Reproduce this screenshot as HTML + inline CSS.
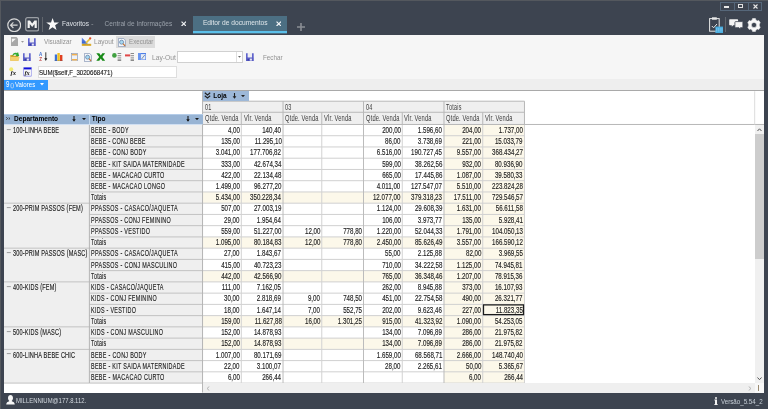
<!DOCTYPE html><html><head><meta charset="utf-8"><style>
*{margin:0;padding:0;box-sizing:border-box}
html,body{width:768px;height:409px;overflow:hidden;background:#3d4450;font-family:"Liberation Sans",sans-serif}
.a{position:absolute}
.t{position:absolute;white-space:nowrap;line-height:1}
.g{-webkit-text-stroke:0.15px currentColor}
</style></head><body><div id="root" style="position:absolute;left:0;top:0;width:768px;height:409px;background:#3d4450;will-change:transform;overflow:hidden"><div class="a" style="left:0;top:0;width:768px;height:1px;background:#54585e"></div>
<div class="a" style="left:0;top:0;width:1px;height:409px;background:#54585e"></div>
<div class="a" style="left:4px;top:34.5px;width:760px;height:358px;background:#f6f6f6"></div>
<div class="a" style="left:4px;top:90.3px;width:760px;height:302.3px;background:#fff"></div>
<div class="a" style="left:89.4px;top:124.48px;width:113.15px;height:11.24px;background:#efefef"></div>
<div class="a" style="left:443.99px;top:124.48px;width:80.48px;height:11.24px;background:#fcf8ea"></div>
<div class="a" style="left:89.4px;top:135.72px;width:113.15px;height:11.24px;background:#efefef"></div>
<div class="a" style="left:443.99px;top:135.72px;width:80.48px;height:11.24px;background:#fcf8ea"></div>
<div class="a" style="left:89.4px;top:146.96px;width:113.15px;height:11.24px;background:#efefef"></div>
<div class="a" style="left:443.99px;top:146.96px;width:80.48px;height:11.24px;background:#fcf8ea"></div>
<div class="a" style="left:89.4px;top:158.21px;width:113.15px;height:11.24px;background:#efefef"></div>
<div class="a" style="left:443.99px;top:158.21px;width:80.48px;height:11.24px;background:#fcf8ea"></div>
<div class="a" style="left:89.4px;top:169.45px;width:113.15px;height:11.24px;background:#efefef"></div>
<div class="a" style="left:443.99px;top:169.45px;width:80.48px;height:11.24px;background:#fcf8ea"></div>
<div class="a" style="left:89.4px;top:180.7px;width:113.15px;height:11.24px;background:#efefef"></div>
<div class="a" style="left:443.99px;top:180.7px;width:80.48px;height:11.24px;background:#fcf8ea"></div>
<div class="a" style="left:89.4px;top:191.94px;width:113.15px;height:11.24px;background:#efefef"></div>
<div class="a" style="left:202.55px;top:191.94px;width:321.92px;height:11.24px;background:#fcf8ea"></div>
<div class="a" style="left:89.4px;top:203.18px;width:113.15px;height:11.24px;background:#efefef"></div>
<div class="a" style="left:443.99px;top:203.18px;width:80.48px;height:11.24px;background:#fcf8ea"></div>
<div class="a" style="left:89.4px;top:214.43px;width:113.15px;height:11.24px;background:#efefef"></div>
<div class="a" style="left:443.99px;top:214.43px;width:80.48px;height:11.24px;background:#fcf8ea"></div>
<div class="a" style="left:89.4px;top:225.67px;width:113.15px;height:11.24px;background:#efefef"></div>
<div class="a" style="left:443.99px;top:225.67px;width:80.48px;height:11.24px;background:#fcf8ea"></div>
<div class="a" style="left:89.4px;top:236.92px;width:113.15px;height:11.24px;background:#efefef"></div>
<div class="a" style="left:202.55px;top:236.92px;width:321.92px;height:11.24px;background:#fcf8ea"></div>
<div class="a" style="left:89.4px;top:248.16px;width:113.15px;height:11.24px;background:#efefef"></div>
<div class="a" style="left:443.99px;top:248.16px;width:80.48px;height:11.24px;background:#fcf8ea"></div>
<div class="a" style="left:89.4px;top:259.4px;width:113.15px;height:11.24px;background:#efefef"></div>
<div class="a" style="left:443.99px;top:259.4px;width:80.48px;height:11.24px;background:#fcf8ea"></div>
<div class="a" style="left:89.4px;top:270.65px;width:113.15px;height:11.24px;background:#efefef"></div>
<div class="a" style="left:202.55px;top:270.65px;width:321.92px;height:11.24px;background:#fcf8ea"></div>
<div class="a" style="left:89.4px;top:281.89px;width:113.15px;height:11.24px;background:#efefef"></div>
<div class="a" style="left:443.99px;top:281.89px;width:80.48px;height:11.24px;background:#fcf8ea"></div>
<div class="a" style="left:89.4px;top:293.14px;width:113.15px;height:11.24px;background:#efefef"></div>
<div class="a" style="left:443.99px;top:293.14px;width:80.48px;height:11.24px;background:#fcf8ea"></div>
<div class="a" style="left:89.4px;top:304.38px;width:113.15px;height:11.24px;background:#efefef"></div>
<div class="a" style="left:443.99px;top:304.38px;width:80.48px;height:11.24px;background:#fcf8ea"></div>
<div class="a" style="left:89.4px;top:315.62px;width:113.15px;height:11.24px;background:#efefef"></div>
<div class="a" style="left:202.55px;top:315.62px;width:321.92px;height:11.24px;background:#fcf8ea"></div>
<div class="a" style="left:89.4px;top:326.87px;width:113.15px;height:11.24px;background:#efefef"></div>
<div class="a" style="left:443.99px;top:326.87px;width:80.48px;height:11.24px;background:#fcf8ea"></div>
<div class="a" style="left:89.4px;top:338.11px;width:113.15px;height:11.24px;background:#efefef"></div>
<div class="a" style="left:202.55px;top:338.11px;width:321.92px;height:11.24px;background:#fcf8ea"></div>
<div class="a" style="left:89.4px;top:349.36px;width:113.15px;height:11.24px;background:#efefef"></div>
<div class="a" style="left:443.99px;top:349.36px;width:80.48px;height:11.24px;background:#fcf8ea"></div>
<div class="a" style="left:89.4px;top:360.6px;width:113.15px;height:11.24px;background:#efefef"></div>
<div class="a" style="left:443.99px;top:360.6px;width:80.48px;height:11.24px;background:#fcf8ea"></div>
<div class="a" style="left:89.4px;top:371.84px;width:113.15px;height:11.24px;background:#efefef"></div>
<div class="a" style="left:443.99px;top:371.84px;width:80.48px;height:11.24px;background:#fcf8ea"></div>
<div class="a" style="left:4px;top:124.48px;width:85.4px;height:258.61px;background:#efefef"></div>
<svg class="a" style="left:0;top:0" width="768" height="409" viewBox="0 0 768 409" fill="none"><path d="M89.4 135.72H202.55" stroke="#c2c2c2" stroke-width="1.0"/><path d="M202.55 135.72H524.47" stroke="#d0d0d0" stroke-width="1.0"/><path d="M89.4 146.96H202.55" stroke="#c2c2c2" stroke-width="1.0"/><path d="M202.55 146.96H524.47" stroke="#d0d0d0" stroke-width="1.0"/><path d="M89.4 158.21H202.55" stroke="#c2c2c2" stroke-width="1.0"/><path d="M202.55 158.21H524.47" stroke="#d0d0d0" stroke-width="1.0"/><path d="M89.4 169.45H202.55" stroke="#c2c2c2" stroke-width="1.0"/><path d="M202.55 169.45H524.47" stroke="#d0d0d0" stroke-width="1.0"/><path d="M89.4 180.7H202.55" stroke="#c2c2c2" stroke-width="1.0"/><path d="M202.55 180.7H524.47" stroke="#d0d0d0" stroke-width="1.0"/><path d="M89.4 191.94H202.55" stroke="#c2c2c2" stroke-width="1.0"/><path d="M202.55 191.94H524.47" stroke="#d0d0d0" stroke-width="1.0"/><path d="M89.4 203.18H202.55" stroke="#c2c2c2" stroke-width="1.0"/><path d="M202.55 203.18H524.47" stroke="#d0d0d0" stroke-width="1.0"/><path d="M89.4 214.43H202.55" stroke="#c2c2c2" stroke-width="1.0"/><path d="M202.55 214.43H524.47" stroke="#d0d0d0" stroke-width="1.0"/><path d="M89.4 225.67H202.55" stroke="#c2c2c2" stroke-width="1.0"/><path d="M202.55 225.67H524.47" stroke="#d0d0d0" stroke-width="1.0"/><path d="M89.4 236.92H202.55" stroke="#c2c2c2" stroke-width="1.0"/><path d="M202.55 236.92H524.47" stroke="#d0d0d0" stroke-width="1.0"/><path d="M89.4 248.16H202.55" stroke="#c2c2c2" stroke-width="1.0"/><path d="M202.55 248.16H524.47" stroke="#d0d0d0" stroke-width="1.0"/><path d="M89.4 259.4H202.55" stroke="#c2c2c2" stroke-width="1.0"/><path d="M202.55 259.4H524.47" stroke="#d0d0d0" stroke-width="1.0"/><path d="M89.4 270.65H202.55" stroke="#c2c2c2" stroke-width="1.0"/><path d="M202.55 270.65H524.47" stroke="#d0d0d0" stroke-width="1.0"/><path d="M89.4 281.89H202.55" stroke="#c2c2c2" stroke-width="1.0"/><path d="M202.55 281.89H524.47" stroke="#d0d0d0" stroke-width="1.0"/><path d="M89.4 293.14H202.55" stroke="#c2c2c2" stroke-width="1.0"/><path d="M202.55 293.14H524.47" stroke="#d0d0d0" stroke-width="1.0"/><path d="M89.4 304.38H202.55" stroke="#c2c2c2" stroke-width="1.0"/><path d="M202.55 304.38H524.47" stroke="#d0d0d0" stroke-width="1.0"/><path d="M89.4 315.62H202.55" stroke="#c2c2c2" stroke-width="1.0"/><path d="M202.55 315.62H524.47" stroke="#d0d0d0" stroke-width="1.0"/><path d="M89.4 326.87H202.55" stroke="#c2c2c2" stroke-width="1.0"/><path d="M202.55 326.87H524.47" stroke="#d0d0d0" stroke-width="1.0"/><path d="M89.4 338.11H202.55" stroke="#c2c2c2" stroke-width="1.0"/><path d="M202.55 338.11H524.47" stroke="#d0d0d0" stroke-width="1.0"/><path d="M89.4 349.36H202.55" stroke="#c2c2c2" stroke-width="1.0"/><path d="M202.55 349.36H524.47" stroke="#d0d0d0" stroke-width="1.0"/><path d="M89.4 360.6H202.55" stroke="#c2c2c2" stroke-width="1.0"/><path d="M202.55 360.6H524.47" stroke="#d0d0d0" stroke-width="1.0"/><path d="M89.4 371.84H202.55" stroke="#c2c2c2" stroke-width="1.0"/><path d="M202.55 371.84H524.47" stroke="#d0d0d0" stroke-width="1.0"/><path d="M89.4 383.09H202.55" stroke="#c2c2c2" stroke-width="1.0"/><path d="M202.55 383.09H524.47" stroke="#d0d0d0" stroke-width="1.0"/><path d="M4 203.18H89.4" stroke="#c2c2c2" stroke-width="1.0"/><path d="M4 248.16H89.4" stroke="#c2c2c2" stroke-width="1.0"/><path d="M4 281.89H89.4" stroke="#c2c2c2" stroke-width="1.0"/><path d="M4 326.87H89.4" stroke="#c2c2c2" stroke-width="1.0"/><path d="M4 349.36H89.4" stroke="#c2c2c2" stroke-width="1.0"/><path d="M4 383.09H89.4" stroke="#c2c2c2" stroke-width="1.0"/><path d="M89.4 124.48V383.09" stroke="#b4b4b4" stroke-width="1.0"/><path d="M202.55 91.2V392.6" stroke="#b4b4b4" stroke-width="1.0"/><path d="M241.3 124.48V383.09" stroke="#d2d2d2" stroke-width="1.0"/><path d="M283.03 124.48V383.09" stroke="#bcbcbc" stroke-width="1.0"/><path d="M321.78 124.48V383.09" stroke="#d2d2d2" stroke-width="1.0"/><path d="M363.51 124.48V383.09" stroke="#bcbcbc" stroke-width="1.0"/><path d="M402.26 124.48V383.09" stroke="#d2d2d2" stroke-width="1.0"/><path d="M443.99 124.48V383.09" stroke="#bcbcbc" stroke-width="1.0"/><path d="M482.74 124.48V383.09" stroke="#d2d2d2" stroke-width="1.0"/><path d="M524.47 124.48V383.09" stroke="#d2d2d2" stroke-width="1.0"/></svg>
<svg class="a" style="left:6px;top:127.58px" width="6" height="3"><path d="M0.8 1.6H4.8" stroke="#777" stroke-width="0.7"/></svg>
<div class="t g" style="top:126.77px;font-size:8.2px;color:#1e1e1e;letter-spacing:0.25px;left:12.7px;transform:scaleX(0.6828);transform-origin:0 0;">100-LINHA BEBE</div>
<div class="t g" style="top:126.77px;font-size:8.2px;color:#1e1e1e;letter-spacing:0.45px;left:91.4px;transform:scaleX(0.6623);transform-origin:0 0;">BEBE - BODY</div>
<div class="t g" style="top:126.77px;font-size:8.2px;color:#1e1e1e;right:528.4px;transform:scaleX(0.7550);transform-origin:100% 0;">4,00</div>
<div class="t g" style="top:126.77px;font-size:8.2px;color:#1e1e1e;right:486.67px;transform:scaleX(0.7550);transform-origin:100% 0;">140,40</div>
<div class="t g" style="top:126.77px;font-size:8.2px;color:#1e1e1e;right:367.44px;transform:scaleX(0.7550);transform-origin:100% 0;">200,00</div>
<div class="t g" style="top:126.77px;font-size:8.2px;color:#1e1e1e;right:325.71px;transform:scaleX(0.7550);transform-origin:100% 0;">1.596,60</div>
<div class="t g" style="top:126.77px;font-size:8.2px;color:#1e1e1e;right:286.96px;transform:scaleX(0.7550);transform-origin:100% 0;">204,00</div>
<div class="t g" style="top:126.77px;font-size:8.2px;color:#1e1e1e;right:245.23px;transform:scaleX(0.7550);transform-origin:100% 0;">1.737,00</div>
<div class="t g" style="top:138.01px;font-size:8.2px;color:#1e1e1e;letter-spacing:0.45px;left:91.4px;transform:scaleX(0.6619);transform-origin:0 0;">BEBE - CONJ BEBE</div>
<div class="t g" style="top:138.01px;font-size:8.2px;color:#1e1e1e;right:528.4px;transform:scaleX(0.7550);transform-origin:100% 0;">135,00</div>
<div class="t g" style="top:138.01px;font-size:8.2px;color:#1e1e1e;right:486.67px;transform:scaleX(0.7550);transform-origin:100% 0;">11.295,10</div>
<div class="t g" style="top:138.01px;font-size:8.2px;color:#1e1e1e;right:367.44px;transform:scaleX(0.7550);transform-origin:100% 0;">86,00</div>
<div class="t g" style="top:138.01px;font-size:8.2px;color:#1e1e1e;right:325.71px;transform:scaleX(0.7550);transform-origin:100% 0;">3.738,69</div>
<div class="t g" style="top:138.01px;font-size:8.2px;color:#1e1e1e;right:286.96px;transform:scaleX(0.7550);transform-origin:100% 0;">221,00</div>
<div class="t g" style="top:138.01px;font-size:8.2px;color:#1e1e1e;right:245.23px;transform:scaleX(0.7550);transform-origin:100% 0;">15.033,79</div>
<div class="t g" style="top:149.26px;font-size:8.2px;color:#1e1e1e;letter-spacing:0.45px;left:91.4px;transform:scaleX(0.6629);transform-origin:0 0;">BEBE - CONJ BODY</div>
<div class="t g" style="top:149.26px;font-size:8.2px;color:#1e1e1e;right:528.4px;transform:scaleX(0.7550);transform-origin:100% 0;">3.041,00</div>
<div class="t g" style="top:149.26px;font-size:8.2px;color:#1e1e1e;right:486.67px;transform:scaleX(0.7550);transform-origin:100% 0;">177.706,82</div>
<div class="t g" style="top:149.26px;font-size:8.2px;color:#1e1e1e;right:367.44px;transform:scaleX(0.7550);transform-origin:100% 0;">6.516,00</div>
<div class="t g" style="top:149.26px;font-size:8.2px;color:#1e1e1e;right:325.71px;transform:scaleX(0.7550);transform-origin:100% 0;">190.727,45</div>
<div class="t g" style="top:149.26px;font-size:8.2px;color:#1e1e1e;right:286.96px;transform:scaleX(0.7550);transform-origin:100% 0;">9.557,00</div>
<div class="t g" style="top:149.26px;font-size:8.2px;color:#1e1e1e;right:245.23px;transform:scaleX(0.7550);transform-origin:100% 0;">368.434,27</div>
<div class="t g" style="top:160.5px;font-size:8.2px;color:#1e1e1e;letter-spacing:0.45px;left:91.4px;transform:scaleX(0.6607);transform-origin:0 0;">BEBE - KIT SAIDA MATERNIDADE</div>
<div class="t g" style="top:160.5px;font-size:8.2px;color:#1e1e1e;right:528.4px;transform:scaleX(0.7550);transform-origin:100% 0;">333,00</div>
<div class="t g" style="top:160.5px;font-size:8.2px;color:#1e1e1e;right:486.67px;transform:scaleX(0.7550);transform-origin:100% 0;">42.674,34</div>
<div class="t g" style="top:160.5px;font-size:8.2px;color:#1e1e1e;right:367.44px;transform:scaleX(0.7550);transform-origin:100% 0;">599,00</div>
<div class="t g" style="top:160.5px;font-size:8.2px;color:#1e1e1e;right:325.71px;transform:scaleX(0.7550);transform-origin:100% 0;">38.262,56</div>
<div class="t g" style="top:160.5px;font-size:8.2px;color:#1e1e1e;right:286.96px;transform:scaleX(0.7550);transform-origin:100% 0;">932,00</div>
<div class="t g" style="top:160.5px;font-size:8.2px;color:#1e1e1e;right:245.23px;transform:scaleX(0.7550);transform-origin:100% 0;">80.936,90</div>
<div class="t g" style="top:171.75px;font-size:8.2px;color:#1e1e1e;letter-spacing:0.45px;left:91.4px;transform:scaleX(0.6660);transform-origin:0 0;">BEBE - MACACAO CURTO</div>
<div class="t g" style="top:171.75px;font-size:8.2px;color:#1e1e1e;right:528.4px;transform:scaleX(0.7550);transform-origin:100% 0;">422,00</div>
<div class="t g" style="top:171.75px;font-size:8.2px;color:#1e1e1e;right:486.67px;transform:scaleX(0.7550);transform-origin:100% 0;">22.134,48</div>
<div class="t g" style="top:171.75px;font-size:8.2px;color:#1e1e1e;right:367.44px;transform:scaleX(0.7550);transform-origin:100% 0;">665,00</div>
<div class="t g" style="top:171.75px;font-size:8.2px;color:#1e1e1e;right:325.71px;transform:scaleX(0.7550);transform-origin:100% 0;">17.445,86</div>
<div class="t g" style="top:171.75px;font-size:8.2px;color:#1e1e1e;right:286.96px;transform:scaleX(0.7550);transform-origin:100% 0;">1.087,00</div>
<div class="t g" style="top:171.75px;font-size:8.2px;color:#1e1e1e;right:245.23px;transform:scaleX(0.7550);transform-origin:100% 0;">39.580,33</div>
<div class="t g" style="top:182.99px;font-size:8.2px;color:#1e1e1e;letter-spacing:0.45px;left:91.4px;transform:scaleX(0.6664);transform-origin:0 0;">BEBE - MACACAO LONGO</div>
<div class="t g" style="top:182.99px;font-size:8.2px;color:#1e1e1e;right:528.4px;transform:scaleX(0.7550);transform-origin:100% 0;">1.499,00</div>
<div class="t g" style="top:182.99px;font-size:8.2px;color:#1e1e1e;right:486.67px;transform:scaleX(0.7550);transform-origin:100% 0;">96.277,20</div>
<div class="t g" style="top:182.99px;font-size:8.2px;color:#1e1e1e;right:367.44px;transform:scaleX(0.7550);transform-origin:100% 0;">4.011,00</div>
<div class="t g" style="top:182.99px;font-size:8.2px;color:#1e1e1e;right:325.71px;transform:scaleX(0.7550);transform-origin:100% 0;">127.547,07</div>
<div class="t g" style="top:182.99px;font-size:8.2px;color:#1e1e1e;right:286.96px;transform:scaleX(0.7550);transform-origin:100% 0;">5.510,00</div>
<div class="t g" style="top:182.99px;font-size:8.2px;color:#1e1e1e;right:245.23px;transform:scaleX(0.7550);transform-origin:100% 0;">223.824,28</div>
<div class="t g" style="top:194.23px;font-size:8.2px;color:#1e1e1e;letter-spacing:0.45px;left:91.4px;transform:scaleX(0.6437);transform-origin:0 0;">Totais</div>
<div class="t g" style="top:194.23px;font-size:8.2px;color:#1e1e1e;right:528.4px;transform:scaleX(0.7550);transform-origin:100% 0;">5.434,00</div>
<div class="t g" style="top:194.23px;font-size:8.2px;color:#1e1e1e;right:486.67px;transform:scaleX(0.7550);transform-origin:100% 0;">350.228,34</div>
<div class="t g" style="top:194.23px;font-size:8.2px;color:#1e1e1e;right:367.44px;transform:scaleX(0.7550);transform-origin:100% 0;">12.077,00</div>
<div class="t g" style="top:194.23px;font-size:8.2px;color:#1e1e1e;right:325.71px;transform:scaleX(0.7550);transform-origin:100% 0;">379.318,23</div>
<div class="t g" style="top:194.23px;font-size:8.2px;color:#1e1e1e;right:286.96px;transform:scaleX(0.7550);transform-origin:100% 0;">17.511,00</div>
<div class="t g" style="top:194.23px;font-size:8.2px;color:#1e1e1e;right:245.23px;transform:scaleX(0.7550);transform-origin:100% 0;">729.546,57</div>
<svg class="a" style="left:6px;top:206.28px" width="6" height="3"><path d="M0.8 1.6H4.8" stroke="#777" stroke-width="0.7"/></svg>
<div class="t g" style="top:205.48px;font-size:8.2px;color:#1e1e1e;letter-spacing:0.25px;left:12.7px;transform:scaleX(0.6831);transform-origin:0 0;">200-PRIM PASSOS (FEM)</div>
<div class="t g" style="top:205.48px;font-size:8.2px;color:#1e1e1e;letter-spacing:0.45px;left:91.4px;transform:scaleX(0.6651);transform-origin:0 0;">PPASSOS - CASACO/JAQUETA</div>
<div class="t g" style="top:205.48px;font-size:8.2px;color:#1e1e1e;right:528.4px;transform:scaleX(0.7550);transform-origin:100% 0;">507,00</div>
<div class="t g" style="top:205.48px;font-size:8.2px;color:#1e1e1e;right:486.67px;transform:scaleX(0.7550);transform-origin:100% 0;">27.003,19</div>
<div class="t g" style="top:205.48px;font-size:8.2px;color:#1e1e1e;right:367.44px;transform:scaleX(0.7550);transform-origin:100% 0;">1.124,00</div>
<div class="t g" style="top:205.48px;font-size:8.2px;color:#1e1e1e;right:325.71px;transform:scaleX(0.7550);transform-origin:100% 0;">29.608,39</div>
<div class="t g" style="top:205.48px;font-size:8.2px;color:#1e1e1e;right:286.96px;transform:scaleX(0.7550);transform-origin:100% 0;">1.631,00</div>
<div class="t g" style="top:205.48px;font-size:8.2px;color:#1e1e1e;right:245.23px;transform:scaleX(0.7550);transform-origin:100% 0;">56.611,58</div>
<div class="t g" style="top:216.72px;font-size:8.2px;color:#1e1e1e;letter-spacing:0.45px;left:91.4px;transform:scaleX(0.6629);transform-origin:0 0;">PPASSOS - CONJ FEMININO</div>
<div class="t g" style="top:216.72px;font-size:8.2px;color:#1e1e1e;right:528.4px;transform:scaleX(0.7550);transform-origin:100% 0;">29,00</div>
<div class="t g" style="top:216.72px;font-size:8.2px;color:#1e1e1e;right:486.67px;transform:scaleX(0.7550);transform-origin:100% 0;">1.954,64</div>
<div class="t g" style="top:216.72px;font-size:8.2px;color:#1e1e1e;right:367.44px;transform:scaleX(0.7550);transform-origin:100% 0;">106,00</div>
<div class="t g" style="top:216.72px;font-size:8.2px;color:#1e1e1e;right:325.71px;transform:scaleX(0.7550);transform-origin:100% 0;">3.973,77</div>
<div class="t g" style="top:216.72px;font-size:8.2px;color:#1e1e1e;right:286.96px;transform:scaleX(0.7550);transform-origin:100% 0;">135,00</div>
<div class="t g" style="top:216.72px;font-size:8.2px;color:#1e1e1e;right:245.23px;transform:scaleX(0.7550);transform-origin:100% 0;">5.928,41</div>
<div class="t g" style="top:227.97px;font-size:8.2px;color:#1e1e1e;letter-spacing:0.45px;left:91.4px;transform:scaleX(0.6630);transform-origin:0 0;">PPASSOS - VESTIDO</div>
<div class="t g" style="top:227.97px;font-size:8.2px;color:#1e1e1e;right:528.4px;transform:scaleX(0.7550);transform-origin:100% 0;">559,00</div>
<div class="t g" style="top:227.97px;font-size:8.2px;color:#1e1e1e;right:486.67px;transform:scaleX(0.7550);transform-origin:100% 0;">51.227,00</div>
<div class="t g" style="top:227.97px;font-size:8.2px;color:#1e1e1e;right:447.92px;transform:scaleX(0.7550);transform-origin:100% 0;">12,00</div>
<div class="t g" style="top:227.97px;font-size:8.2px;color:#1e1e1e;right:406.19px;transform:scaleX(0.7550);transform-origin:100% 0;">778,80</div>
<div class="t g" style="top:227.97px;font-size:8.2px;color:#1e1e1e;right:367.44px;transform:scaleX(0.7550);transform-origin:100% 0;">1.220,00</div>
<div class="t g" style="top:227.97px;font-size:8.2px;color:#1e1e1e;right:325.71px;transform:scaleX(0.7550);transform-origin:100% 0;">52.044,33</div>
<div class="t g" style="top:227.97px;font-size:8.2px;color:#1e1e1e;right:286.96px;transform:scaleX(0.7550);transform-origin:100% 0;">1.791,00</div>
<div class="t g" style="top:227.97px;font-size:8.2px;color:#1e1e1e;right:245.23px;transform:scaleX(0.7550);transform-origin:100% 0;">104.050,13</div>
<div class="t g" style="top:239.21px;font-size:8.2px;color:#1e1e1e;letter-spacing:0.45px;left:91.4px;transform:scaleX(0.6437);transform-origin:0 0;">Totais</div>
<div class="t g" style="top:239.21px;font-size:8.2px;color:#1e1e1e;right:528.4px;transform:scaleX(0.7550);transform-origin:100% 0;">1.095,00</div>
<div class="t g" style="top:239.21px;font-size:8.2px;color:#1e1e1e;right:486.67px;transform:scaleX(0.7550);transform-origin:100% 0;">80.184,83</div>
<div class="t g" style="top:239.21px;font-size:8.2px;color:#1e1e1e;right:447.92px;transform:scaleX(0.7550);transform-origin:100% 0;">12,00</div>
<div class="t g" style="top:239.21px;font-size:8.2px;color:#1e1e1e;right:406.19px;transform:scaleX(0.7550);transform-origin:100% 0;">778,80</div>
<div class="t g" style="top:239.21px;font-size:8.2px;color:#1e1e1e;right:367.44px;transform:scaleX(0.7550);transform-origin:100% 0;">2.450,00</div>
<div class="t g" style="top:239.21px;font-size:8.2px;color:#1e1e1e;right:325.71px;transform:scaleX(0.7550);transform-origin:100% 0;">85.626,49</div>
<div class="t g" style="top:239.21px;font-size:8.2px;color:#1e1e1e;right:286.96px;transform:scaleX(0.7550);transform-origin:100% 0;">3.557,00</div>
<div class="t g" style="top:239.21px;font-size:8.2px;color:#1e1e1e;right:245.23px;transform:scaleX(0.7550);transform-origin:100% 0;">166.590,12</div>
<svg class="a" style="left:6px;top:251.26px" width="6" height="3"><path d="M0.8 1.6H4.8" stroke="#777" stroke-width="0.7"/></svg>
<div class="t g" style="top:250.45px;font-size:8.2px;color:#1e1e1e;letter-spacing:0.25px;left:12.7px;transform:scaleX(0.6837);transform-origin:0 0;">300-PRIM PASSOS (MASC)</div>
<div class="t g" style="top:250.45px;font-size:8.2px;color:#1e1e1e;letter-spacing:0.45px;left:91.4px;transform:scaleX(0.6651);transform-origin:0 0;">PPASSOS - CASACO/JAQUETA</div>
<div class="t g" style="top:250.45px;font-size:8.2px;color:#1e1e1e;right:528.4px;transform:scaleX(0.7550);transform-origin:100% 0;">27,00</div>
<div class="t g" style="top:250.45px;font-size:8.2px;color:#1e1e1e;right:486.67px;transform:scaleX(0.7550);transform-origin:100% 0;">1.843,67</div>
<div class="t g" style="top:250.45px;font-size:8.2px;color:#1e1e1e;right:367.44px;transform:scaleX(0.7550);transform-origin:100% 0;">55,00</div>
<div class="t g" style="top:250.45px;font-size:8.2px;color:#1e1e1e;right:325.71px;transform:scaleX(0.7550);transform-origin:100% 0;">2.125,88</div>
<div class="t g" style="top:250.45px;font-size:8.2px;color:#1e1e1e;right:286.96px;transform:scaleX(0.7550);transform-origin:100% 0;">82,00</div>
<div class="t g" style="top:250.45px;font-size:8.2px;color:#1e1e1e;right:245.23px;transform:scaleX(0.7550);transform-origin:100% 0;">3.969,55</div>
<div class="t g" style="top:261.7px;font-size:8.2px;color:#1e1e1e;letter-spacing:0.45px;left:91.4px;transform:scaleX(0.6647);transform-origin:0 0;">PPASSOS - CONJ MASCULINO</div>
<div class="t g" style="top:261.7px;font-size:8.2px;color:#1e1e1e;right:528.4px;transform:scaleX(0.7550);transform-origin:100% 0;">415,00</div>
<div class="t g" style="top:261.7px;font-size:8.2px;color:#1e1e1e;right:486.67px;transform:scaleX(0.7550);transform-origin:100% 0;">40.723,23</div>
<div class="t g" style="top:261.7px;font-size:8.2px;color:#1e1e1e;right:367.44px;transform:scaleX(0.7550);transform-origin:100% 0;">710,00</div>
<div class="t g" style="top:261.7px;font-size:8.2px;color:#1e1e1e;right:325.71px;transform:scaleX(0.7550);transform-origin:100% 0;">34.222,58</div>
<div class="t g" style="top:261.7px;font-size:8.2px;color:#1e1e1e;right:286.96px;transform:scaleX(0.7550);transform-origin:100% 0;">1.125,00</div>
<div class="t g" style="top:261.7px;font-size:8.2px;color:#1e1e1e;right:245.23px;transform:scaleX(0.7550);transform-origin:100% 0;">74.945,81</div>
<div class="t g" style="top:272.94px;font-size:8.2px;color:#1e1e1e;letter-spacing:0.45px;left:91.4px;transform:scaleX(0.6437);transform-origin:0 0;">Totais</div>
<div class="t g" style="top:272.94px;font-size:8.2px;color:#1e1e1e;right:528.4px;transform:scaleX(0.7550);transform-origin:100% 0;">442,00</div>
<div class="t g" style="top:272.94px;font-size:8.2px;color:#1e1e1e;right:486.67px;transform:scaleX(0.7550);transform-origin:100% 0;">42.566,90</div>
<div class="t g" style="top:272.94px;font-size:8.2px;color:#1e1e1e;right:367.44px;transform:scaleX(0.7550);transform-origin:100% 0;">765,00</div>
<div class="t g" style="top:272.94px;font-size:8.2px;color:#1e1e1e;right:325.71px;transform:scaleX(0.7550);transform-origin:100% 0;">36.348,46</div>
<div class="t g" style="top:272.94px;font-size:8.2px;color:#1e1e1e;right:286.96px;transform:scaleX(0.7550);transform-origin:100% 0;">1.207,00</div>
<div class="t g" style="top:272.94px;font-size:8.2px;color:#1e1e1e;right:245.23px;transform:scaleX(0.7550);transform-origin:100% 0;">78.915,36</div>
<svg class="a" style="left:6px;top:284.99px" width="6" height="3"><path d="M0.8 1.6H4.8" stroke="#777" stroke-width="0.7"/></svg>
<div class="t g" style="top:284.19px;font-size:8.2px;color:#1e1e1e;letter-spacing:0.25px;left:12.7px;transform:scaleX(0.6806);transform-origin:0 0;">400-KIDS (FEM)</div>
<div class="t g" style="top:284.19px;font-size:8.2px;color:#1e1e1e;letter-spacing:0.45px;left:91.4px;transform:scaleX(0.6626);transform-origin:0 0;">KIDS - CASACO/JAQUETA</div>
<div class="t g" style="top:284.19px;font-size:8.2px;color:#1e1e1e;right:528.4px;transform:scaleX(0.7550);transform-origin:100% 0;">111,00</div>
<div class="t g" style="top:284.19px;font-size:8.2px;color:#1e1e1e;right:486.67px;transform:scaleX(0.7550);transform-origin:100% 0;">7.162,05</div>
<div class="t g" style="top:284.19px;font-size:8.2px;color:#1e1e1e;right:367.44px;transform:scaleX(0.7550);transform-origin:100% 0;">262,00</div>
<div class="t g" style="top:284.19px;font-size:8.2px;color:#1e1e1e;right:325.71px;transform:scaleX(0.7550);transform-origin:100% 0;">8.945,88</div>
<div class="t g" style="top:284.19px;font-size:8.2px;color:#1e1e1e;right:286.96px;transform:scaleX(0.7550);transform-origin:100% 0;">373,00</div>
<div class="t g" style="top:284.19px;font-size:8.2px;color:#1e1e1e;right:245.23px;transform:scaleX(0.7550);transform-origin:100% 0;">16.107,93</div>
<div class="t g" style="top:295.43px;font-size:8.2px;color:#1e1e1e;letter-spacing:0.45px;left:91.4px;transform:scaleX(0.6597);transform-origin:0 0;">KIDS - CONJ FEMININO</div>
<div class="t g" style="top:295.43px;font-size:8.2px;color:#1e1e1e;right:528.4px;transform:scaleX(0.7550);transform-origin:100% 0;">30,00</div>
<div class="t g" style="top:295.43px;font-size:8.2px;color:#1e1e1e;right:486.67px;transform:scaleX(0.7550);transform-origin:100% 0;">2.818,69</div>
<div class="t g" style="top:295.43px;font-size:8.2px;color:#1e1e1e;right:447.92px;transform:scaleX(0.7550);transform-origin:100% 0;">9,00</div>
<div class="t g" style="top:295.43px;font-size:8.2px;color:#1e1e1e;right:406.19px;transform:scaleX(0.7550);transform-origin:100% 0;">748,50</div>
<div class="t g" style="top:295.43px;font-size:8.2px;color:#1e1e1e;right:367.44px;transform:scaleX(0.7550);transform-origin:100% 0;">451,00</div>
<div class="t g" style="top:295.43px;font-size:8.2px;color:#1e1e1e;right:325.71px;transform:scaleX(0.7550);transform-origin:100% 0;">22.754,58</div>
<div class="t g" style="top:295.43px;font-size:8.2px;color:#1e1e1e;right:286.96px;transform:scaleX(0.7550);transform-origin:100% 0;">490,00</div>
<div class="t g" style="top:295.43px;font-size:8.2px;color:#1e1e1e;right:245.23px;transform:scaleX(0.7550);transform-origin:100% 0;">26.321,77</div>
<div class="t g" style="top:306.67px;font-size:8.2px;color:#1e1e1e;letter-spacing:0.45px;left:91.4px;transform:scaleX(0.6584);transform-origin:0 0;">KIDS - VESTIDO</div>
<div class="t g" style="top:306.67px;font-size:8.2px;color:#1e1e1e;right:528.4px;transform:scaleX(0.7550);transform-origin:100% 0;">18,00</div>
<div class="t g" style="top:306.67px;font-size:8.2px;color:#1e1e1e;right:486.67px;transform:scaleX(0.7550);transform-origin:100% 0;">1.647,14</div>
<div class="t g" style="top:306.67px;font-size:8.2px;color:#1e1e1e;right:447.92px;transform:scaleX(0.7550);transform-origin:100% 0;">7,00</div>
<div class="t g" style="top:306.67px;font-size:8.2px;color:#1e1e1e;right:406.19px;transform:scaleX(0.7550);transform-origin:100% 0;">552,75</div>
<div class="t g" style="top:306.67px;font-size:8.2px;color:#1e1e1e;right:367.44px;transform:scaleX(0.7550);transform-origin:100% 0;">202,00</div>
<div class="t g" style="top:306.67px;font-size:8.2px;color:#1e1e1e;right:325.71px;transform:scaleX(0.7550);transform-origin:100% 0;">9.623,46</div>
<div class="t g" style="top:306.67px;font-size:8.2px;color:#1e1e1e;right:286.96px;transform:scaleX(0.7550);transform-origin:100% 0;">227,00</div>
<div class="t g" style="top:306.67px;font-size:8.2px;color:#1e1e1e;right:245.23px;transform:scaleX(0.7550);transform-origin:100% 0;">11.823,35</div>
<div class="t g" style="top:317.92px;font-size:8.2px;color:#1e1e1e;letter-spacing:0.45px;left:91.4px;transform:scaleX(0.6437);transform-origin:0 0;">Totais</div>
<div class="t g" style="top:317.92px;font-size:8.2px;color:#1e1e1e;right:528.4px;transform:scaleX(0.7550);transform-origin:100% 0;">159,00</div>
<div class="t g" style="top:317.92px;font-size:8.2px;color:#1e1e1e;right:486.67px;transform:scaleX(0.7550);transform-origin:100% 0;">11.627,88</div>
<div class="t g" style="top:317.92px;font-size:8.2px;color:#1e1e1e;right:447.92px;transform:scaleX(0.7550);transform-origin:100% 0;">16,00</div>
<div class="t g" style="top:317.92px;font-size:8.2px;color:#1e1e1e;right:406.19px;transform:scaleX(0.7550);transform-origin:100% 0;">1.301,25</div>
<div class="t g" style="top:317.92px;font-size:8.2px;color:#1e1e1e;right:367.44px;transform:scaleX(0.7550);transform-origin:100% 0;">915,00</div>
<div class="t g" style="top:317.92px;font-size:8.2px;color:#1e1e1e;right:325.71px;transform:scaleX(0.7550);transform-origin:100% 0;">41.323,92</div>
<div class="t g" style="top:317.92px;font-size:8.2px;color:#1e1e1e;right:286.96px;transform:scaleX(0.7550);transform-origin:100% 0;">1.090,00</div>
<div class="t g" style="top:317.92px;font-size:8.2px;color:#1e1e1e;right:245.23px;transform:scaleX(0.7550);transform-origin:100% 0;">54.253,05</div>
<svg class="a" style="left:6px;top:329.97px" width="6" height="3"><path d="M0.8 1.6H4.8" stroke="#777" stroke-width="0.7"/></svg>
<div class="t g" style="top:329.16px;font-size:8.2px;color:#1e1e1e;letter-spacing:0.25px;left:12.7px;transform:scaleX(0.6818);transform-origin:0 0;">500-KIDS (MASC)</div>
<div class="t g" style="top:329.16px;font-size:8.2px;color:#1e1e1e;letter-spacing:0.45px;left:91.4px;transform:scaleX(0.6622);transform-origin:0 0;">KIDS - CONJ MASCULINO</div>
<div class="t g" style="top:329.16px;font-size:8.2px;color:#1e1e1e;right:528.4px;transform:scaleX(0.7550);transform-origin:100% 0;">152,00</div>
<div class="t g" style="top:329.16px;font-size:8.2px;color:#1e1e1e;right:486.67px;transform:scaleX(0.7550);transform-origin:100% 0;">14.878,93</div>
<div class="t g" style="top:329.16px;font-size:8.2px;color:#1e1e1e;right:367.44px;transform:scaleX(0.7550);transform-origin:100% 0;">134,00</div>
<div class="t g" style="top:329.16px;font-size:8.2px;color:#1e1e1e;right:325.71px;transform:scaleX(0.7550);transform-origin:100% 0;">7.096,89</div>
<div class="t g" style="top:329.16px;font-size:8.2px;color:#1e1e1e;right:286.96px;transform:scaleX(0.7550);transform-origin:100% 0;">286,00</div>
<div class="t g" style="top:329.16px;font-size:8.2px;color:#1e1e1e;right:245.23px;transform:scaleX(0.7550);transform-origin:100% 0;">21.975,82</div>
<div class="t g" style="top:340.41px;font-size:8.2px;color:#1e1e1e;letter-spacing:0.45px;left:91.4px;transform:scaleX(0.6437);transform-origin:0 0;">Totais</div>
<div class="t g" style="top:340.41px;font-size:8.2px;color:#1e1e1e;right:528.4px;transform:scaleX(0.7550);transform-origin:100% 0;">152,00</div>
<div class="t g" style="top:340.41px;font-size:8.2px;color:#1e1e1e;right:486.67px;transform:scaleX(0.7550);transform-origin:100% 0;">14.878,93</div>
<div class="t g" style="top:340.41px;font-size:8.2px;color:#1e1e1e;right:367.44px;transform:scaleX(0.7550);transform-origin:100% 0;">134,00</div>
<div class="t g" style="top:340.41px;font-size:8.2px;color:#1e1e1e;right:325.71px;transform:scaleX(0.7550);transform-origin:100% 0;">7.096,89</div>
<div class="t g" style="top:340.41px;font-size:8.2px;color:#1e1e1e;right:286.96px;transform:scaleX(0.7550);transform-origin:100% 0;">286,00</div>
<div class="t g" style="top:340.41px;font-size:8.2px;color:#1e1e1e;right:245.23px;transform:scaleX(0.7550);transform-origin:100% 0;">21.975,82</div>
<svg class="a" style="left:6px;top:352.46px" width="6" height="3"><path d="M0.8 1.6H4.8" stroke="#777" stroke-width="0.7"/></svg>
<div class="t g" style="top:351.65px;font-size:8.2px;color:#1e1e1e;letter-spacing:0.25px;left:12.7px;transform:scaleX(0.6825);transform-origin:0 0;">600-LINHA BEBE CHIC</div>
<div class="t g" style="top:351.65px;font-size:8.2px;color:#1e1e1e;letter-spacing:0.45px;left:91.4px;transform:scaleX(0.6629);transform-origin:0 0;">BEBE - CONJ BODY</div>
<div class="t g" style="top:351.65px;font-size:8.2px;color:#1e1e1e;right:528.4px;transform:scaleX(0.7550);transform-origin:100% 0;">1.007,00</div>
<div class="t g" style="top:351.65px;font-size:8.2px;color:#1e1e1e;right:486.67px;transform:scaleX(0.7550);transform-origin:100% 0;">80.171,69</div>
<div class="t g" style="top:351.65px;font-size:8.2px;color:#1e1e1e;right:367.44px;transform:scaleX(0.7550);transform-origin:100% 0;">1.659,00</div>
<div class="t g" style="top:351.65px;font-size:8.2px;color:#1e1e1e;right:325.71px;transform:scaleX(0.7550);transform-origin:100% 0;">68.568,71</div>
<div class="t g" style="top:351.65px;font-size:8.2px;color:#1e1e1e;right:286.96px;transform:scaleX(0.7550);transform-origin:100% 0;">2.666,00</div>
<div class="t g" style="top:351.65px;font-size:8.2px;color:#1e1e1e;right:245.23px;transform:scaleX(0.7550);transform-origin:100% 0;">148.740,40</div>
<div class="t g" style="top:362.89px;font-size:8.2px;color:#1e1e1e;letter-spacing:0.45px;left:91.4px;transform:scaleX(0.6607);transform-origin:0 0;">BEBE - KIT SAIDA MATERNIDADE</div>
<div class="t g" style="top:362.89px;font-size:8.2px;color:#1e1e1e;right:528.4px;transform:scaleX(0.7550);transform-origin:100% 0;">22,00</div>
<div class="t g" style="top:362.89px;font-size:8.2px;color:#1e1e1e;right:486.67px;transform:scaleX(0.7550);transform-origin:100% 0;">3.100,07</div>
<div class="t g" style="top:362.89px;font-size:8.2px;color:#1e1e1e;right:367.44px;transform:scaleX(0.7550);transform-origin:100% 0;">28,00</div>
<div class="t g" style="top:362.89px;font-size:8.2px;color:#1e1e1e;right:325.71px;transform:scaleX(0.7550);transform-origin:100% 0;">2.265,61</div>
<div class="t g" style="top:362.89px;font-size:8.2px;color:#1e1e1e;right:286.96px;transform:scaleX(0.7550);transform-origin:100% 0;">50,00</div>
<div class="t g" style="top:362.89px;font-size:8.2px;color:#1e1e1e;right:245.23px;transform:scaleX(0.7550);transform-origin:100% 0;">5.365,67</div>
<div class="t g" style="top:374.14px;font-size:8.2px;color:#1e1e1e;letter-spacing:0.45px;left:91.4px;transform:scaleX(0.6660);transform-origin:0 0;">BEBE - MACACAO CURTO</div>
<div class="t g" style="top:374.14px;font-size:8.2px;color:#1e1e1e;right:528.4px;transform:scaleX(0.7550);transform-origin:100% 0;">6,00</div>
<div class="t g" style="top:374.14px;font-size:8.2px;color:#1e1e1e;right:486.67px;transform:scaleX(0.7550);transform-origin:100% 0;">266,44</div>
<div class="t g" style="top:374.14px;font-size:8.2px;color:#1e1e1e;right:286.96px;transform:scaleX(0.7550);transform-origin:100% 0;">6,00</div>
<div class="t g" style="top:374.14px;font-size:8.2px;color:#1e1e1e;right:245.23px;transform:scaleX(0.7550);transform-origin:100% 0;">266,44</div>
<svg class="a" style="left:0;top:0" width="768" height="409"><rect x="483.5" y="304.9" width="40" height="9.7" fill="none" stroke="#1a1a1a" stroke-width="1.25"/></svg>
<div class="a" style="left:202.55px;top:101.2px;width:321.92px;height:23.28px;background:#efefef"></div>
<div class="t" style="top:103.59px;font-size:8.2px;color:#3c3c3c;letter-spacing:0.45px;left:204.75px;transform:scaleX(0.6735);transform-origin:0 0;">01</div>
<div class="t" style="top:103.59px;font-size:8.2px;color:#3c3c3c;letter-spacing:0.45px;left:285.23px;transform:scaleX(0.6735);transform-origin:0 0;">03</div>
<div class="t" style="top:103.59px;font-size:8.2px;color:#3c3c3c;letter-spacing:0.45px;left:365.71px;transform:scaleX(0.6735);transform-origin:0 0;">04</div>
<div class="t" style="top:103.59px;font-size:8.2px;color:#3c3c3c;letter-spacing:0.45px;left:446.19px;transform:scaleX(0.6571);transform-origin:0 0;">Totais</div>
<div class="t" style="top:114.69px;font-size:8.2px;color:#3c3c3c;letter-spacing:0.2px;left:204.75px;transform:scaleX(0.7059);transform-origin:0 0;">Qtde. Venda</div>
<div class="t" style="top:114.69px;font-size:8.2px;color:#3c3c3c;letter-spacing:0.2px;left:243.5px;transform:scaleX(0.7024);transform-origin:0 0;">Vlr. Venda</div>
<div class="t" style="top:114.69px;font-size:8.2px;color:#3c3c3c;letter-spacing:0.2px;left:285.23px;transform:scaleX(0.7059);transform-origin:0 0;">Qtde. Venda</div>
<div class="t" style="top:114.69px;font-size:8.2px;color:#3c3c3c;letter-spacing:0.2px;left:323.98px;transform:scaleX(0.7024);transform-origin:0 0;">Vlr. Venda</div>
<div class="t" style="top:114.69px;font-size:8.2px;color:#3c3c3c;letter-spacing:0.2px;left:365.71px;transform:scaleX(0.7059);transform-origin:0 0;">Qtde. Venda</div>
<div class="t" style="top:114.69px;font-size:8.2px;color:#3c3c3c;letter-spacing:0.2px;left:404.46px;transform:scaleX(0.7024);transform-origin:0 0;">Vlr. Venda</div>
<div class="t" style="top:114.69px;font-size:8.2px;color:#3c3c3c;letter-spacing:0.2px;left:446.19px;transform:scaleX(0.7059);transform-origin:0 0;">Qtde. Venda</div>
<div class="t" style="top:114.69px;font-size:8.2px;color:#3c3c3c;letter-spacing:0.2px;left:484.94px;transform:scaleX(0.7024);transform-origin:0 0;">Vlr. Venda</div>
<svg class="a" style="left:0;top:0" width="768" height="409" viewBox="0 0 768 409" fill="none"><path d="M202.55 101.2H524.47" stroke="#b8b8b8" stroke-width="1.0"/><path d="M202.55 112.25H524.47" stroke="#b8b8b8" stroke-width="1.0"/><path d="M202.55 124.48H764" stroke="#b8b8b8" stroke-width="1.0"/><path d="M4 124.48H202.55" stroke="#cfdff2" stroke-width="1.0"/><path d="M202.55 101.2V124.48" stroke="#b8b8b8" stroke-width="1.0"/><path d="M241.3 112.25V124.48" stroke="#b8b8b8" stroke-width="1.0"/><path d="M283.03 101.2V124.48" stroke="#b8b8b8" stroke-width="1.0"/><path d="M321.78 112.25V124.48" stroke="#b8b8b8" stroke-width="1.0"/><path d="M363.51 101.2V124.48" stroke="#b8b8b8" stroke-width="1.0"/><path d="M402.26 112.25V124.48" stroke="#b8b8b8" stroke-width="1.0"/><path d="M443.99 101.2V124.48" stroke="#b8b8b8" stroke-width="1.0"/><path d="M482.74 112.25V124.48" stroke="#b8b8b8" stroke-width="1.0"/><path d="M524.47 101.2V124.48" stroke="#b8b8b8" stroke-width="1.0"/><path d="M754.7 91.2V124.48" stroke="#dcdcdc" stroke-width="1.0"/></svg>
<div class="a" style="left:202.8px;top:91.2px;width:46px;height:10px;background:#9db8d8"></div>
<svg class="a" style="left:204px;top:91.8px" width="7" height="7" viewBox="0 0 7 7"><path d="M0.8 0.8 L3.5 3 L6.2 0.8 M0.8 3.8 L3.5 6 L6.2 3.8" stroke="#222" stroke-width="1.1" fill="none"/></svg>
<div class="t" style="left:213.2px;top:93.1px;font-size:6.5px;font-weight:bold;color:#000">Loja</div>
<svg class="a" style="left:232px;top:93px" width="5" height="6" viewBox="0 0 5 6"><path d="M2.5 0 V5" stroke="#222" stroke-width="1.1"/><path d="M0.6 3.3 L2.5 5.8 L4.4 3.3 Z" fill="#222"/></svg>
<svg class="a" style="left:241px;top:94.8px" width="4" height="2.2" viewBox="0 0 4 2.2"><path d="M0 0 H4 L2 2.2 Z" fill="#222"/></svg>
<div class="a" style="left:4px;top:114px;width:85.4px;height:10px;background:#98b4d4;border-top:1px solid #b4cce8"></div>
<div class="a" style="left:89px;top:114px;width:113.55px;height:10px;background:#98b4d4;border-top:1px solid #b4cce8;border-left:1px solid #c4daf0"></div>
<svg class="a" style="left:5.6px;top:117.4px" width="5" height="3" viewBox="0 0 5 3"><path d="M0.3 0.3 L1.6 1.5 L0.3 2.7 M2.6 0.3 L3.9 1.5 L2.6 2.7" stroke="#222" stroke-width="0.8" fill="none"/></svg>
<div class="t" style="left:14.1px;top:115.6px;font-size:6.55px;font-weight:bold;color:#000">Departamento</div>
<div class="t" style="left:91.8px;top:115.6px;font-size:6.55px;font-weight:bold;color:#000">Tipo</div>
<svg class="a" style="left:72.2px;top:116px" width="4" height="6" viewBox="0 0 4 6"><path d="M2 0 V5" stroke="#1a1a1a" stroke-width="1.1"/><path d="M0.2 3.2 L2 5.8 L3.8 3.2 Z" fill="#1a1a1a"/></svg>
<svg class="a" style="left:81.6px;top:117.8px" width="4" height="2.2" viewBox="0 0 4 2.2"><path d="M0 0 H4 L2 2.2 Z" fill="#1a1a1a"/></svg>
<svg class="a" style="left:186px;top:116px" width="4" height="6" viewBox="0 0 4 6"><path d="M2 0 V5" stroke="#1a1a1a" stroke-width="1.1"/><path d="M0.2 3.2 L2 5.8 L3.8 3.2 Z" fill="#1a1a1a"/></svg>
<svg class="a" style="left:195px;top:117.8px" width="4" height="2.2" viewBox="0 0 4 2.2"><path d="M0 0 H4 L2 2.2 Z" fill="#1a1a1a"/></svg>
<div class="a" style="left:755px;top:125px;width:9px;height:258px;background:#f0f0f0"></div>
<div class="a" style="left:755px;top:134.1px;width:9px;height:125px;background:#cdcdcd"></div>
<svg class="a" style="left:757.2px;top:127.8px" width="5" height="3.5" viewBox="0 0 5 3.5"><path d="M0.5 3 L2.5 0.8 L4.5 3" stroke="#555" stroke-width="1" fill="none"/></svg>
<svg class="a" style="left:757.2px;top:376.8px" width="5" height="3.5" viewBox="0 0 5 3.5"><path d="M0.5 0.5 L2.5 2.7 L4.5 0.5" stroke="#555" stroke-width="1" fill="none"/></svg>
<div class="a" style="left:203.3px;top:383px;width:551.7px;height:9.6px;background:#efefef"></div>
<svg class="a" style="left:205.8px;top:385.8px" width="4" height="5" viewBox="0 0 4 5"><path d="M3.3 0.5 L1 2.5 L3.3 4.5" stroke="#b0b0b0" stroke-width="0.9" fill="none"/></svg>
<svg class="a" style="left:748.2px;top:385.8px" width="4" height="5" viewBox="0 0 4 5"><path d="M0.7 0.5 L3 2.5 L0.7 4.5" stroke="#b0b0b0" stroke-width="0.9" fill="none"/></svg>
<div class="a" style="left:755px;top:383px;width:9px;height:9.6px;background:#f8f8f8"></div>
<div class="a" style="left:757.8px;top:385px;width:1.2px;height:6px;background:#9a8a70"></div>
<div class="a" style="left:4px;top:79.4px;width:760px;height:10.9px;background:#eeeeee"></div>
<div class="a" style="left:4px;top:90px;width:760px;height:1px;background:#a9a9a9"></div>
<div class="a" style="left:4px;top:79.6px;width:43.9px;height:10.5px;background:#3399ff"></div>
<div class="t" style="top:81.39px;font-size:8.2px;color:#fff;left:5.7px;transform:scaleX(0.7500);transform-origin:0 0;">9</div>
<svg class="a" style="left:9.6px;top:83.4px" width="4.4" height="5.4"><rect x="0.9" y="0.5" width="2.6" height="4.4" rx="1" fill="none" stroke="#c0d8f4" stroke-width="0.8"/></svg>
<div class="t" style="top:80.54px;font-size:7.3px;color:#fff;left:15.3px;transform:scaleX(0.8340);transform-origin:0 0;">Valores</div>
<svg class="a" style="left:40px;top:83.4px" width="4" height="2.4" viewBox="0 0 4 2.4"><path d="M0 0 H4 L2 2.4 Z" fill="#fff"/></svg>
<svg class="a" style="left:11px;top:37.2px" width="7.4" height="9.2" viewBox="0 0 7.4 9.2"><path d="M0 0 H5.5 L7.4 2 V9.2 H0 Z" fill="#a8a8a8"/><path d="M0.9 1.7 H4.9 L0.9 5.5 Z" fill="#f6f6f6"/></svg>
<svg class="a" style="left:20.9px;top:41.3px" width="3" height="1.8" viewBox="0 0 3 1.8"><path d="M0 0 H3 L1.5 1.8 Z" fill="#999"/></svg>
<svg class="a" style="left:27.9px;top:38px" width="8" height="8.4" viewBox="0 0 8 8.4"><path d="M0 0.3 H1.8 V4.6 H5.9 V0.3 H7.7 V8.3 H0 Z" fill="#6064cc"/><rect x="1.8" y="0.3" width="4.1" height="4.3" fill="#eeeef2"/><rect x="0.4" y="4.6" width="6.9" height="3.4" fill="#5a5ec4"/><rect x="3.9" y="5.6" width="2" height="2" fill="#e8e8f4"/><rect x="1.6" y="6.2" width="1.2" height="1.2" fill="#2a2e90"/></svg>
<div class="t" style="top:38.24px;font-size:7.3px;color:#929292;left:44.3px;transform:scaleX(0.8760);transform-origin:0 0;">Visualizar</div>
<svg class="a" style="left:81px;top:37px" width="11" height="10" viewBox="0 0 11 10"><defs><linearGradient id="lg1" x1="0" y1="0" x2="0" y2="1"><stop offset="0" stop-color="#7890e8"/><stop offset="1" stop-color="#3060d0"/></linearGradient></defs><path d="M0.8 0.4 L0.8 6.7 L6.8 6.7 Z" fill="url(#lg1)"/><path d="M5 6 L9.2 1.6" stroke="#e6c040" stroke-width="1.7"/><circle cx="9.2" cy="1.3" r="1.15" fill="#e04a30"/><rect x="0.8" y="6.8" width="9.4" height="2.1" fill="#dcae30"/><path d="M2 7.6H9.2" stroke="#a07818" stroke-width="0.5" stroke-dasharray="0.6 0.6"/></svg>
<div class="t" style="top:38.24px;font-size:7.3px;color:#929292;left:93.6px;transform:scaleX(0.8940);transform-origin:0 0;">Layout</div>
<div class="a" style="left:116.1px;top:36.1px;width:38.7px;height:11.5px;background:#dcdcdc"></div>
<svg class="a" style="left:118px;top:37.6px" width="8" height="9" viewBox="0 0 8 9"><path d="M0.4 0.4 H5.6 L7.4 2.2 V8.6 H0.4 Z" fill="#f4f6fa" stroke="#8090b0" stroke-width="0.7"/><circle cx="3.6" cy="4.2" r="2" fill="#a8d8f0" stroke="#5a7aa0" stroke-width="0.7"/><path d="M5 5.6 L7 7.8" stroke="#c07030" stroke-width="1.2"/></svg>
<div class="t" style="top:38.24px;font-size:7.3px;color:#929292;left:128.8px;transform:scaleX(0.8480);transform-origin:0 0;">Executar</div>
<svg class="a" style="left:9.7px;top:52.3px" width="10" height="9" viewBox="0 0 10 9"><path d="M0.3 3 H3.3 L4.1 3.8 H8.4 V8.8 H0.3 Z" fill="#d8a830"/><path d="M0.3 5 H9.6 L8.6 8.8 H0.3 Z" fill="#f4d070"/><path d="M2.2 4.2 C2.6 1.4 5 0.2 7 1.2 L8 0 L9.2 4 L5.4 4.2 L6.5 2.8 C5 2 3.4 2.6 2.2 4.2 Z" fill="#2eaa30"/></svg>
<svg class="a" style="left:23.4px;top:52.5px" width="8" height="8.4" viewBox="0 0 8 8.4"><path d="M0 0.3 H1.8 V4.6 H5.9 V0.3 H7.7 V8.3 H0 Z" fill="#6064cc"/><rect x="1.8" y="0.3" width="4.1" height="4.3" fill="#eeeef2"/><rect x="0.4" y="4.6" width="6.9" height="3.4" fill="#5a5ec4"/><rect x="3.9" y="5.6" width="2" height="2" fill="#e8e8f4"/><rect x="1.6" y="6.2" width="1.2" height="1.2" fill="#2a2e90"/></svg>
<svg class="a" style="left:39.2px;top:52.4px" width="9" height="9.2" viewBox="0 0 9 9.2"><text x="0" y="4.2" font-size="4.6" font-family="Liberation Sans" font-weight="bold" fill="#4070d0">A</text><text x="0.2" y="9" font-size="4.6" font-family="Liberation Sans" font-weight="bold" fill="#c04848">Z</text><path d="M6.8 0.3 V7.5" stroke="#222" stroke-width="0.9"/><path d="M5.3 6.2 L6.8 9 L8.3 6.2 Z" fill="#222"/></svg>
<svg class="a" style="left:54.2px;top:52.3px" width="9.2" height="9.2" viewBox="0 0 9.2 9.2"><rect x="0.8" y="2.5" width="2.4" height="6.5" fill="#3a70d8"/><rect x="3.4" y="1" width="2.4" height="8" fill="#f0c020"/><rect x="6" y="3" width="2.4" height="6" fill="#e04020"/><path d="M0.3 9 H9" stroke="#556" stroke-width="0.5"/></svg>
<svg class="a" style="left:71.2px;top:52.5px" width="7" height="8.4" viewBox="0 0 7 8.4"><rect x="0.4" y="0.4" width="6.2" height="7.6" fill="#eef2f8" stroke="#8a9ab8" stroke-width="0.7"/><rect x="0.9" y="0.9" width="5.2" height="1.5" fill="#f0b050"/><rect x="0.9" y="6" width="5.2" height="1.5" fill="#f0b050"/></svg>
<svg class="a" style="left:83.7px;top:52.5px" width="8" height="9" viewBox="0 0 8 9"><path d="M0.4 0.4 H5.6 L7.4 2.2 V8.6 H0.4 Z" fill="#f4f6fa" stroke="#8090b0" stroke-width="0.7"/><circle cx="3.6" cy="4.2" r="2" fill="#a8d8f0" stroke="#5a7aa0" stroke-width="0.7"/><path d="M5 5.6 L7 7.8" stroke="#c07030" stroke-width="1.2"/></svg>
<svg class="a" style="left:95.8px;top:52.9px" width="9.6" height="8" viewBox="0 0 9.6 8"><path d="M0.3 0.2 H3.3 L4.8 2.5 L6.3 0.2 H9.3 L6.4 4 L9.3 7.8 H6.3 L4.8 5.5 L3.3 7.8 H0.3 L3.2 4 Z" fill="#178a17"/></svg>
<svg class="a" style="left:112px;top:52.8px" width="9.5" height="8" viewBox="0 0 9.5 8"><circle cx="2.4" cy="2.4" r="2.3" fill="#40a040"/><rect x="5.6" y="0" width="3.6" height="1" fill="#888"/><rect x="5.6" y="2.2" width="3.6" height="1" fill="#888"/><rect x="5.6" y="4.4" width="3.6" height="1" fill="#888"/><rect x="5.6" y="6.6" width="3.6" height="1" fill="#444"/></svg>
<svg class="a" style="left:124.8px;top:52.6px" width="9.5" height="8" viewBox="0 0 9.5 8"><rect x="0" y="1.4" width="5.2" height="2" fill="#e04848"/><rect x="5.6" y="0" width="3.6" height="1" fill="#888"/><rect x="5.6" y="2.2" width="3.6" height="1" fill="#888"/><rect x="5.6" y="4.4" width="3.6" height="1" fill="#888"/><rect x="5.6" y="6.6" width="3.6" height="1" fill="#444"/></svg>
<svg class="a" style="left:137.9px;top:52.8px" width="8.1" height="7.2" viewBox="0 0 8.1 7.2"><rect x="0" y="0" width="8.1" height="7.2" fill="#4f80e8"/><rect x="0" y="0" width="2.9" height="7.2" fill="#6a96f0"/><rect x="2.9" y="1.1" width="4.5" height="5.4" fill="#e6ecf6"/><path d="M3.6 6 L6.8 2" stroke="#6c84a8" stroke-width="0.9"/></svg>
<div class="t" style="top:53.64px;font-size:7.3px;color:#929292;left:151.7px;transform:scaleX(0.9200);transform-origin:0 0;">Lay-Out</div>
<div class="a" style="left:177px;top:51.2px;width:65.5px;height:11.4px;background:#fff;border:1px solid #d0d0d0"></div>
<div class="a" style="left:235.8px;top:52px;width:1px;height:9.8px;background:#e0e0e0"></div>
<svg class="a" style="left:237.6px;top:56.2px" width="3" height="1.8" viewBox="0 0 3 1.8"><path d="M0 0 H3 L1.5 1.8 Z" fill="#666"/></svg>
<svg class="a" style="left:246px;top:52.5px" width="8" height="8.4" viewBox="0 0 8 8.4"><path d="M0 0.3 H1.8 V4.6 H5.9 V0.3 H7.7 V8.3 H0 Z" fill="#6064cc"/><rect x="1.8" y="0.3" width="4.1" height="4.3" fill="#eeeef2"/><rect x="0.4" y="4.6" width="6.9" height="3.4" fill="#5a5ec4"/><rect x="3.9" y="5.6" width="2" height="2" fill="#e8e8f4"/><rect x="1.6" y="6.2" width="1.2" height="1.2" fill="#2a2e90"/></svg>
<div class="t" style="top:53.64px;font-size:7.3px;color:#929292;left:262.8px;transform:scaleX(0.8660);transform-origin:0 0;">Fechar</div>
<svg class="a" style="left:9.4px;top:66.8px" width="9" height="9" viewBox="0 0 9 9"><circle cx="2.2" cy="2.2" r="2" fill="#f0ea70"/><text x="1.6" y="7.8" font-size="6.6" font-style="italic" font-weight="bold" font-family="Liberation Serif" fill="#111">fx</text></svg>
<svg class="a" style="left:23px;top:67px" width="9.2" height="9.6" viewBox="0 0 9.2 9.6"><rect x="0.4" y="0.4" width="8.4" height="8.8" rx="0.8" fill="#f4f4f8" stroke="#8c8ce8" stroke-width="0.8"/><rect x="0.8" y="0.6" width="7.6" height="1.8" fill="#1010d8"/><text x="1.4" y="8.2" font-size="6.4" font-style="italic" font-weight="bold" font-family="Liberation Serif" fill="#111">fx</text></svg>
<div class="a" style="left:37.5px;top:66.4px;width:139px;height:11.2px;background:#fff;border:1px solid #dedede"></div>
<div class="t g" style="top:68.74px;font-size:7.3px;color:#222;left:39px;transform:scaleX(0.8380);transform-origin:0 0;">SUM($self,F_3020668471)</div>
<svg class="a" style="left:7px;top:17.8px" width="14.4" height="14.4" viewBox="0 0 14.4 14.4"><circle cx="7.2" cy="7.2" r="6.4" stroke="#d8d8d8" stroke-width="1.2" fill="none"/><path d="M3.6 7.2 H10.6 M6.4 4.4 L3.6 7.2 L6.4 10" stroke="#d8d8d8" stroke-width="1.2" fill="none"/></svg>
<svg class="a" style="left:25px;top:17.4px" width="14.4" height="14.4" viewBox="0 0 14.4 14.4"><rect x="0.7" y="0.7" width="13" height="13.2" rx="1.8" stroke="#9a9ea4" stroke-width="1.3" fill="none"/><path d="M2.6 11 V3.6 H5 L7.2 6.6 L9.4 3.6 H11.8 V11 H9.6 V7 L7.2 10 L4.8 7 V11 Z" fill="#f2f2f2"/></svg>
<div class="a" style="left:42.3px;top:17px;width:0.9px;height:14.6px;background:#62676e"></div>
<svg class="a" style="left:46.1px;top:17.9px" width="13.2" height="12.6" viewBox="0 0 24 23" preserveAspectRatio="none"><path d="M12 0 L14.9 8.2 H23.6 L16.6 13.4 L19.2 22 L12 16.8 L4.8 22 L7.4 13.4 L0.4 8.2 H9.1 Z" fill="#fafafa"/></svg>
<div class="t" style="left:62px;top:20.6px;font-size:6.56px;color:#dfe3e8">Favoritos</div>
<svg class="a" style="left:91.4px;top:23.6px" width="2.6" height="1.6" viewBox="0 0 2.6 1.6"><path d="M0 0 H2.6 L1.3 1.6 Z" fill="#767c84"/></svg>
<div class="t" style="left:104.6px;top:20.6px;font-size:6.5px;color:#9aa1aa">Central de Informações</div>
<svg class="a" style="left:180.6px;top:20.9px" width="5.6" height="5.6" viewBox="0 0 6 6"><path d="M0.6 0.6 L5.4 5.4 M5.4 0.6 L0.6 5.4" stroke="#eef0f2" stroke-width="1.3"/></svg>
<div class="a" style="left:193.1px;top:15.5px;width:93.8px;height:18px;background:#4c6f83"></div>
<div class="a" style="left:193.1px;top:30.8px;width:93.8px;height:2.3px;background:#5cc0ea"></div>
<div class="t" style="left:202.9px;top:19.9px;font-size:6.65px;color:#dfe6ea">Editor de documentos</div>
<svg class="a" style="left:275.6px;top:20.8px" width="5.6" height="5.6" viewBox="0 0 6 6"><path d="M0.6 0.6 L5.4 5.4 M5.4 0.6 L0.6 5.4" stroke="#f4f6f8" stroke-width="1.3"/></svg>
<svg class="a" style="left:297.2px;top:22.8px" width="8" height="8" viewBox="0 0 8 8"><path d="M4 0 V8 M0 4 H8" stroke="#8a8e94" stroke-width="1.6"/></svg>
<div class="a" style="left:720.2px;top:2.1px;width:42.1px;height:8.6px;border:0.8px solid #56677a"></div>
<div class="a" style="left:734px;top:2.1px;width:0.8px;height:8.6px;background:#56677a"></div>
<div class="a" style="left:748px;top:2.1px;width:0.8px;height:8.6px;background:#56677a"></div>
<div class="a" style="left:724.3px;top:6.3px;width:5.1px;height:2px;background:#e8e8e8"></div>
<div class="a" style="left:738.2px;top:4.3px;width:5px;height:3.8px;border:1px solid #e0e0e0;border-top-width:1.4px"></div>
<svg class="a" style="left:753px;top:4px" width="5" height="5" viewBox="0 0 6 6"><path d="M0.6 0.6 L5.4 5.4 M5.4 0.6 L0.6 5.4" stroke="#e8e8e8" stroke-width="1.3"/></svg>
<svg class="a" style="left:708.6px;top:16.8px" width="14.2" height="16.2" viewBox="0 0 14.2 16.2"><rect x="0.6" y="1.6" width="9.6" height="12.6" stroke="#e8e8e8" stroke-width="1" fill="none"/><rect x="3" y="0.3" width="4.8" height="2.4" fill="#e8e8e8"/><path d="M2.8 9 L4.6 10.8 L8 7" stroke="#e8e8e8" stroke-width="1" fill="none"/><rect x="6.4" y="9.6" width="7.6" height="6.5" fill="#4aaee0"/><path d="M7.6 11 V14.6 M9.4 11 V14.6 M11.2 11 V14.6 M13 11 V14.6" stroke="#9ad0f0" stroke-width="0.5"/></svg>
<div class="a" style="left:724.9px;top:17px;width:1px;height:14.5px;background:#626870"></div>
<svg class="a" style="left:728.8px;top:19.4px" width="14.4" height="10.4" viewBox="0 0 14.4 10.4"><path d="M0.8 0.3 H8.4 Q9.1 0.3 9.1 1 V5.6 Q9.1 6.3 8.4 6.3 H4.2 L2.8 7.8 V6.3 H0.8 Q0.2 6.3 0.2 5.6 V1 Q0.2 0.3 0.8 0.3 Z" fill="#f4f4f4"/><path d="M6.6 2.6 H13.2 Q13.9 2.6 13.9 3.3 V8 Q13.9 8.7 13.2 8.7 H11.4 V10.2 L10 8.7 H6.6 Q5.9 8.7 5.9 8 V3.3 Q5.9 2.6 6.6 2.6 Z" fill="#f4f4f4" stroke="#3d4450" stroke-width="0.8"/></svg>
<svg class="a" style="left:747px;top:17.65px" width="14" height="14" viewBox="0 0 14 14"><path fill="#f8f8f8" fill-rule="evenodd" stroke="#f8f8f8" stroke-width="0.5" stroke-linejoin="round" d="M5.24 1.89 L5.52 0.57 L8.48 0.57 L8.76 1.89 L10.54 2.92 L11.83 2.50 L13.31 5.07 L12.30 5.97 L12.30 8.03 L13.31 8.93 L11.83 11.50 L10.54 11.08 L8.76 12.11 L8.48 13.43 L5.52 13.43 L5.24 12.11 L3.46 11.08 L2.17 11.50 L0.69 8.93 L1.70 8.03 L1.70 5.97 L0.69 5.07 L2.17 2.50 L3.46 2.92 Z M9.60 7.00 A2.6 2.6 0 1 0 4.40 7.00 A2.6 2.6 0 1 0 9.60 7.00 Z"/></svg>
<svg class="a" style="left:5.6px;top:395.4px" width="9" height="9.4" viewBox="0 0 9 9.4"><path d="M0.2 9.4 C0.4 7.6 1.6 6.8 3.2 6.3 V5.7 C2.4 5.1 2 4.1 2 3 C2 1.3 3.1 0 4.5 0 C5.9 0 7 1.3 7 3 C7 4.1 6.6 5.1 5.8 5.7 V6.3 C7.4 6.8 8.6 7.6 8.8 9.4 Z" fill="#f6f6f6"/></svg>
<div class="t" style="top:396.64px;font-size:7.3px;color:#d4dae0;left:15.6px;transform:scaleX(0.8130);transform-origin:0 0;">MILLENNIUM@177.8.112.</div>
<svg class="a" style="left:713.9px;top:396.6px" width="4" height="8.2" viewBox="0 0 4 8.2"><circle cx="2" cy="1" r="1" fill="#f0f0f0"/><path d="M0.4 2.6 H3 V7.2 H3.8 V8.2 H0.2 V7.2 H1 V3.6 H0.4 Z" fill="#f0f0f0"/></svg>
<div class="t" style="top:398.04px;font-size:7.3px;color:#c6ced6;left:721px;transform:scaleX(0.8470);transform-origin:0 0;">Versão_5.54_2</div></div></body></html>
